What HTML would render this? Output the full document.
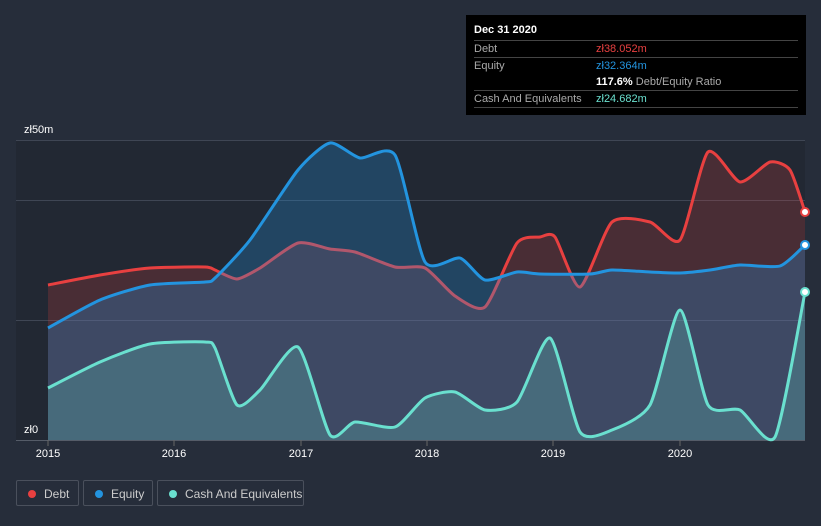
<!DOCTYPE html>
<html><head><style>
body{margin:0;width:821px;height:526px;background:#262d3a;font-family:"Liberation Sans",sans-serif;overflow:hidden;position:relative}
.tt{position:absolute;left:466px;top:15px;width:340px;height:100px;background:#000;color:#fff;font-size:11px}
.row{position:absolute;left:8px;right:8px;border-top:1px solid #444;height:17px;line-height:17px}
.lab{color:#aaa;position:absolute;left:0}
.val{position:absolute;left:122px}
.leg{position:absolute;top:480px;height:26px;border:1px solid #4a505c;border-radius:2px;color:#ccc;font-size:12px;line-height:26px;box-sizing:border-box}
.leg i{position:absolute;left:11px;top:9px;width:8px;height:8px;border-radius:50%}
.leg span{position:absolute;left:27px}
</style></head><body>
<svg id="s" width="821" height="526" style="position:absolute;left:0;top:0">
<rect x="16" y="140" width="789" height="300" fill="#222833"/>
<g stroke="#3f4654" stroke-width="1">
<line x1="16" y1="140.5" x2="805" y2="140.5"/><line x1="16" y1="200.5" x2="805" y2="200.5"/><line x1="16" y1="320.5" x2="805" y2="320.5"/><line x1="16" y1="440.5" x2="805" y2="440.5" stroke="#555c68"/>
</g>
<g stroke="#666" stroke-width="1"><line x1="48" y1="440" x2="48" y2="446"/><line x1="174" y1="440" x2="174" y2="446"/><line x1="301" y1="440" x2="301" y2="446"/><line x1="427" y1="440" x2="427" y2="446"/><line x1="553" y1="440" x2="553" y2="446"/><line x1="680" y1="440" x2="680" y2="446"/></g>
<g id="plots"></g>
<circle cx="805" cy="212" r="4" fill="#fff" stroke="#e84040" stroke-width="2"/>
<circle cx="805" cy="245" r="4" fill="#fff" stroke="#2394df" stroke-width="2"/>
<circle cx="805" cy="292" r="4" fill="#fff" stroke="#6ae0cf" stroke-width="2"/>
<g fill="#fff" font-size="11" font-family="Liberation Sans"><text x="24" y="133">zł50m</text><text x="24" y="433">zł0</text>
<g text-anchor="middle"><text x="48" y="457">2015</text><text x="174" y="457">2016</text><text x="301" y="457">2017</text><text x="427" y="457">2018</text><text x="553" y="457">2019</text><text x="680" y="457">2020</text></g></g>
</svg>
<script>
var S=[
["#e84040",0.2,"48,285 100,275 150,268 205,267 215,270 237,279 260,268 298,243 330,249 355,252 395,267 425,268 455,296 485,307 517,243 540,237 555,237 580,287 612,222 650,222 680,240 708,152 740,182 770,162 790,170 805,212"],
["#2394df",0.28,"48,328 100,300 150,285 205,282 215,278 250,240 298,170 330,143 360,158 395,155 425,262 460,258 485,280 517,272 540,274 590,274 612,270 650,272 680,273 710,270 740,265 780,266 805,245"],
["#6ae0cf",0.22,"48,388 100,362 150,344 205,342 215,348 237,405 260,390 298,347 330,435 355,422 395,427 425,398 455,392 485,410 517,402 550,338 580,432 612,430 650,405 680,310 708,405 740,410 775,437 805,292"]];
var g=document.getElementById("plots"),h="";
S.forEach(function(s){
var p=s[2].split(" ").map(function(t){return t.split(",").map(Number)});
var d="M"+p[0][0]+","+p[0][1];
for(var i=0;i<p.length-1;i++){
var p0=p[i-1]||p[i],p1=p[i],p2=p[i+1],p3=p[i+2]||p2,k=0.11;
d+=" C"+(p1[0]+(p2[0]-p0[0])*k)+","+(p1[1]+(p2[1]-p0[1])*k)+" "+(p2[0]-(p3[0]-p1[0])*k)+","+(p2[1]-(p3[1]-p1[1])*k)+" "+p2[0]+","+p2[1];}
h+='<path d="'+d+' L805,440 L48,440Z" fill="'+s[0]+'" fill-opacity="'+s[1]+'"/>';
h+='<path d="'+d+'" fill="none" stroke="'+s[0]+'" stroke-width="3"/>';
});
g.innerHTML=h;
</script>
<div class="tt">
<div style="position:absolute;left:8px;top:9px;font-weight:bold">Dec 31 2020</div>
<div class="row" style="top:25px"><span class="lab">Debt</span><span class="val" style="color:#e84040">zł38.052m</span></div>
<div class="row" style="top:42px"><span class="lab">Equity</span><span class="val" style="color:#2394df">zł32.364m</span></div>
<div style="position:absolute;left:130px;top:59px;line-height:17px"><b>117.6%</b> <span style="color:#aaa">Debt/Equity Ratio</span></div>
<div class="row" style="top:75px"><span class="lab">Cash And Equivalents</span><span class="val" style="color:#6ae0cf">zł24.682m</span></div>
<div class="row" style="top:92px;height:0"></div>
</div>
<div class="leg" style="left:16px;width:63px"><i style="background:#e84040"></i><span>Debt</span></div>
<div class="leg" style="left:83px;width:70px"><i style="background:#2394df"></i><span>Equity</span></div>
<div class="leg" style="left:157px;width:147px"><i style="background:#6ae0cf"></i><span>Cash And Equivalents</span></div>
</body></html>
